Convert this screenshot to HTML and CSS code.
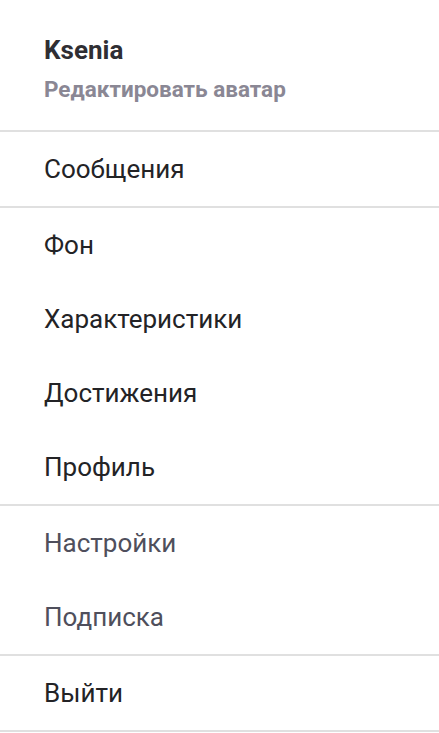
FILE: index.html
```html
<!DOCTYPE html>
<html lang="ru">
<head>
<meta charset="utf-8">
<link rel="stylesheet" href="styles.css">
</head>
<body>
<nav class="menu">
  <div class="profile">
    <div class="name">Ksenia</div>
    <div class="edit">Редактировать аватар</div>
  </div>
  <div class="group">
    <div class="item">Сообщения</div>
  </div>
  <div class="group">
    <div class="item">Фон</div>
    <div class="item">Характеристики</div>
    <div class="item">Достижения</div>
    <div class="item">Профиль</div>
  </div>
  <div class="group muted">
    <div class="item">Настройки</div>
    <div class="item">Подписка</div>
  </div>
  <div class="group">
    <div class="item">Выйти</div>
  </div>
</nav>
</body>
</html>
```
FILE: styles.css
```css
html, body {
  margin: 0;
  padding: 0;
  background: #ffffff;
}
body {
  font-family: Roboto, "Noto Sans", sans-serif;
  width: 439px;
}
.menu {
  display: flex;
  flex-direction: column;
}
.profile {
  height: 132px;
  box-sizing: border-box;
  padding: 34px 44px 0;
  border-bottom: 2px solid #e0e0e0;
}
.name {
  font-size: 26px;
  font-weight: 700;
  color: #2f2e33;
  line-height: 32px;
}
.edit {
  font-size: 22.5px;
  font-weight: 700;
  color: #8a8794;
  line-height: 28px;
  margin-top: 9px;
}
.group {
  display: flex;
  flex-direction: column;
  border-bottom: 2px solid #e0e0e0;
}
.item {
  height: 74px;
  display: flex;
  align-items: center;
  padding-left: 44px;
  font-size: 26px;
  color: #232326;
}
.muted .item {
  color: #4f4f5c;
}
```
